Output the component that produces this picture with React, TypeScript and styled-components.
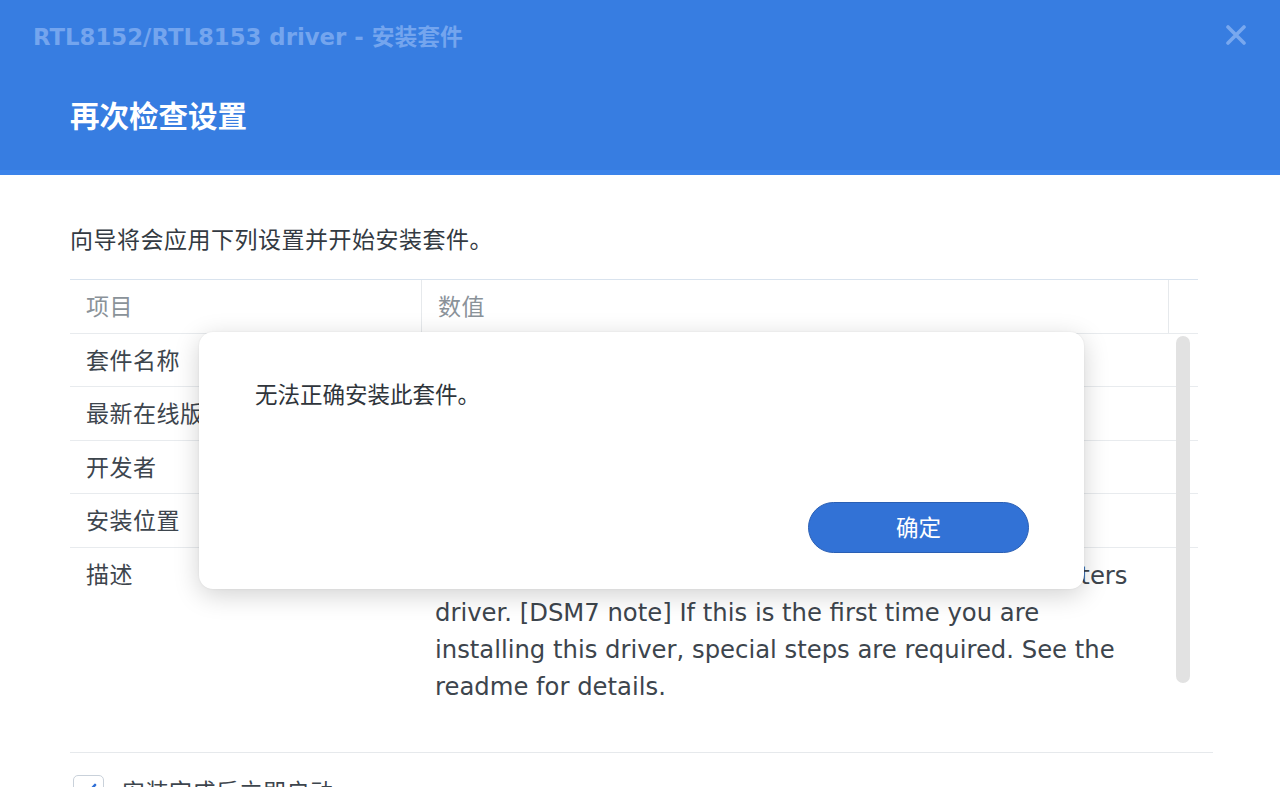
import styled, { createGlobalStyle } from "styled-components";

const GlobalStyle = createGlobalStyle`
    html, body {
        margin: 0;
        padding: 0;
        background: #ffffff;
        overflow: hidden;
    }
    body {
        font-family: "DejaVu Sans", "Noto Sans CJK SC", sans-serif;
        color: #414b55;
    }
`;

const Window = styled.div`
    position: relative;
    width: 1280px;
    height: 787px;
    overflow: hidden;
    background: #fff;
`;

const Header = styled.header`
    height: 170px;
    background: #377de1;
    border-bottom: 5px solid #3b83ea;
    display: flex;
    flex-direction: column;
`;

const TitleBar = styled.div`
    height: 70px;
    display: flex;
    align-items: center;
    justify-content: space-between;
    padding: 0 32px 0 33px;
`;

const WindowTitle = styled.div`
    font-family: "DejaVu Sans", "Noto Sans CJK SC", sans-serif;
    font-weight: bold;
    font-size: 22.8px;
    color: #74a5ee;
`;

const CloseButton = styled.button`
    width: 24px;
    height: 24px;
    padding: 0;
    border: none;
    background: none;
    display: flex;
    align-items: center;
    justify-content: center;
`;

const StepTitle = styled.h1`
    margin: 0;
    padding: 23px 70px 0;
    font-family: "Noto Sans CJK SC", sans-serif;
    font-weight: bold;
    font-size: 29.5px;
    color: #ffffff;
`;

const Body = styled.main`
    padding: 0 67px 0 70px;
`;

const Intro = styled.p`
    margin: 0;
    padding: 48px 0 26px;
    font-family: "Noto Sans CJK SC", sans-serif;
    font-size: 23px;
    letter-spacing: 0.5px;
    line-height: 30px;
    color: #333a42;
`;

const Table = styled.div`
    position: relative;
    width: 1128px;
    border-top: 1px solid #d9e3ee;
`;

const Row = styled.div<{ $last?: boolean }>`
    display: grid;
    grid-template-columns: 351px 747px 30px;
    min-height: 52.5px;
    border-bottom: ${(p) => (p.$last ? "none" : "1px solid #e8ebee")};
`;

const Cell = styled.div<{ $head?: boolean; $divider?: boolean }>`
    padding: 10px 15px 0 16px;
    font-family: "Noto Sans CJK SC", sans-serif;
    font-size: 23px;
    letter-spacing: 0.5px;
    line-height: 30px;
    color: ${(p) => (p.$head ? "#8a9299" : "#3d454d")};
    border-left: ${(p) => (p.$divider ? "1px solid #e6e9ec" : "none")};
`;

const Description = styled.div`
    padding: 9px 0 0 14px;
    font-family: "DejaVu Sans", "Noto Sans CJK SC", sans-serif;
    font-size: 24.3px;
    line-height: 37px;
    color: #3d454d;
`;

const DescLine = styled.div`
    white-space: nowrap;
`;

const ScrollThumb = styled.div`
    position: absolute;
    left: 1106px;
    top: 56px;
    width: 14px;
    height: 347px;
    border-radius: 7px;
    background: #e2e2e2;
`;

const FooterRule = styled.div`
    width: 1143px;
    height: 1px;
    margin-top: 47px;
    background: #e6e9ec;
`;

const CheckRow = styled.label`
    display: flex;
    align-items: flex-start;
    gap: 18px;
    padding: 22px 0 0 3px;
    font-family: "Noto Sans CJK SC", sans-serif;
    font-size: 23px;
    letter-spacing: 0.5px;
    line-height: 30px;
    color: #3d454d;
`;

const CheckBox = styled.span`
    width: 31px;
    height: 31px;
    box-sizing: border-box;
    border: 1px solid #c9d1da;
    border-radius: 5px;
    display: flex;
    align-items: center;
    justify-content: center;
`;

const Overlay = styled.div`
    position: absolute;
    left: 199px;
    top: 332px;
    width: 885px;
    height: 257px;
    box-sizing: border-box;
    background: #ffffff;
    border-radius: 14px;
    box-shadow: 0 6px 26px rgba(0, 0, 0, 0.18), 0 0 2px rgba(0, 0, 0, 0.08);
    padding: 46px 55px 36px 56px;
    display: flex;
    flex-direction: column;
    justify-content: space-between;
`;

const Message = styled.div`
    font-family: "Noto Sans CJK SC", sans-serif;
    font-size: 22.5px;
    line-height: 30px;
    color: #2f353b;
`;

const Actions = styled.div`
    display: flex;
    justify-content: flex-end;
`;

const PrimaryButton = styled.button`
    width: 221px;
    height: 51px;
    border-radius: 26px;
    border: 1px solid #2a5fb4;
    background: #3272d6;
    color: #ffffff;
    font-family: "Noto Sans CJK SC", sans-serif;
    font-size: 22.5px;
    line-height: 30px;
    padding: 0 0 3px;
    cursor: pointer;
`;

const rows = ["套件名称", "最新在线版本", "开发者", "安装位置"];

const descLines = [
    "Realtek RTL8152/8153/8156B USB 3.0 Ethernet adapters",
    "driver. [DSM7 note] If this is the first time you are",
    "installing this driver, special steps are required. See the",
    "readme for details.",
];

export default function App() {
    return (
        <Window>
            <GlobalStyle />
            <Header>
                <TitleBar>
                    <WindowTitle>RTL8152/RTL8153 driver - 安装套件</WindowTitle>
                    <CloseButton aria-label="close">
                        <svg width="20" height="20" viewBox="0 0 20 20">
                            <path d="M2 2 L18 18 M18 2 L2 18" stroke="#78a8ef" strokeWidth="3.6" strokeLinecap="round" />
                        </svg>
                    </CloseButton>
                </TitleBar>
                <StepTitle>再次检查设置</StepTitle>
            </Header>
            <Body>
                <Intro>向导将会应用下列设置并开始安装套件。</Intro>
                <Table>
                    <Row>
                        <Cell $head>项目</Cell>
                        <Cell $head $divider>数值</Cell>
                        <Cell $head $divider />
                    </Row>
                    {rows.map((name) => (
                        <Row key={name}>
                            <Cell>{name}</Cell>
                            <Cell />
                            <Cell />
                        </Row>
                    ))}
                    <Row $last>
                        <Cell>描述</Cell>
                        <Description>
                            {descLines.map((line) => (
                                <DescLine key={line}>{line}</DescLine>
                            ))}
                        </Description>
                        <Cell />
                    </Row>
                    <ScrollThumb />
                </Table>
                <FooterRule />
                <CheckRow>
                    <CheckBox>
                        <svg width="20" height="20" viewBox="0 0 20 20">
                            <path d="M4 10 L8 14 L16 5" stroke="#2f6fd6" strokeWidth="2.6" fill="none" strokeLinecap="round" strokeLinejoin="round" />
                        </svg>
                    </CheckBox>
                    安装完成后立即启动
                </CheckRow>
            </Body>
            <Overlay>
                <Message>无法正确安装此套件。</Message>
                <Actions>
                    <PrimaryButton>确定</PrimaryButton>
                </Actions>
            </Overlay>
        </Window>
    );
}
